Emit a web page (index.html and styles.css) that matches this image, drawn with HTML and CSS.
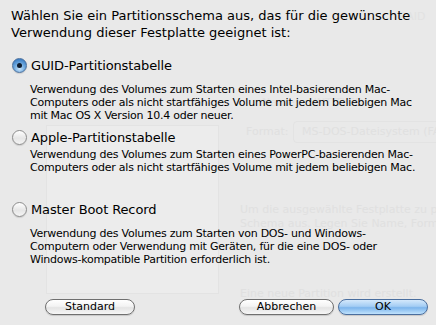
FILE: index.html
```html
<!DOCTYPE html>
<html lang="de">
<head>
    <meta charset="UTF-8">
    <title>Partitionsschema</title>
    <link rel="stylesheet" href="styles.css">
</head>
<body>
    <!-- window behind the sheet, shows through faintly -->
    <div class="behind">
        <div class="ghost-box"></div>
        <span class="ghost-tab">RAID</span>
        <span class="ghost-text g-name">Name:&nbsp;&nbsp;&nbsp;UNTITLED</span>
        <span class="ghost-text g-format">Format:</span>
        <span class="ghost-field">MS-DOS-Dateisystem (FAT)</span>
        <span class="ghost-text g-info">Um die ausgewählte Festplatte zu partitionieren,<br>Schema aus. Legen Sie Name, Format und</span>
        <span class="ghost-text g-new">Eine neue Partition wird erstellt.</span>
    </div>

    <div class="sheet">
        <p class="prompt">Wählen Sie ein Partitionsschema aus, das für die gewünschte<br>Verwendung dieser Festplatte geeignet ist:</p>

        <label class="option guid">
            <span class="radio checked"></span>
            <span class="option-name">GUID-Partitionstabelle</span>
        </label>
        <p class="desc guid-desc">Verwendung des Volumes zum Starten eines Intel-basierenden Mac-<br>Computers oder als nicht startfähiges Volume mit jedem beliebigen Mac<br>mit Mac OS X Version 10.4 oder neuer.</p>

        <label class="option apple">
            <span class="radio"></span>
            <span class="option-name">Apple-Partitionstabelle</span>
        </label>
        <p class="desc apple-desc">Verwendung des Volumes zum Starten eines PowerPC-basierenden Mac-<br>Computers oder als nicht startfähiges Volume mit jedem beliebigen Mac.</p>

        <label class="option mbr">
            <span class="radio"></span>
            <span class="option-name">Master Boot Record</span>
        </label>
        <p class="desc mbr-desc">Verwendung des Volumes zum Starten von DOS- und Windows-<br>Computern oder Verwendung mit Geräten, für die eine DOS- oder<br>Windows-kompatible Partition erforderlich ist.</p>

        <div class="buttons">
            <button class="btn btn-standard">Standard</button>
            <div class="spacer"></div>
            <button class="btn btn-cancel">Abbrechen</button>
            <button class="btn btn-ok">OK</button>
        </div>
    </div>
</body>
</html>
```

FILE: styles.css
```css
body {
    margin: 0;
    width: 436px;
    height: 325px;
    overflow: hidden;
    background-color: #e9e9e9;
    font-family: 'DejaVu Sans', 'Liberation Sans', sans-serif;
    color: #000;
    position: relative;
}

/* faint window content under the sheet */
.behind {
    position: absolute;
    inset: 0;
    overflow: hidden;
    color: #e0e0e0;
    font-size: 11px;
}

.ghost-box {
    position: absolute;
    left: 46px;
    top: 125px;
    width: 171px;
    height: 167px;
    border: 1px solid #e3e3e3;
    background-color: #ececec;
}

.ghost-tab {
    position: absolute;
    left: 399px;
    top: 10px;
    font-size: 11px;
    color: #e2e2e2;
}

.ghost-text {
    position: absolute;
    white-space: nowrap;
    line-height: 14px;
}

.g-name { left: 262px; top: 96px; }
.g-format { left: 246px; top: 125px; }
.g-info { left: 240px; top: 203px; }
.g-new { left: 240px; top: 287px; }

.ghost-field {
    position: absolute;
    left: 293px;
    top: 121px;
    width: 150px;
    height: 20px;
    padding-left: 8px;
    line-height: 20px;
    border: 1px solid #e3e3e3;
    border-radius: 4px;
    white-space: nowrap;
    overflow: hidden;
    color: #e0e0e0;
}

.sheet {
    position: relative;
    padding: 7px 8px 0 11px;
    white-space: nowrap;
}

.prompt {
    margin: 0;
    font-size: 13px;
    line-height: 17px;
}

.option {
    display: flex;
    align-items: center;
    height: 17px;
    font-size: 13px;
    line-height: 17px;
    letter-spacing: -0.12px;
}

.guid { margin-top: 16px; }
.apple { margin-top: 7px; }
.mbr { margin-top: 27px; }

.radio {
    width: 13px;
    height: 13px;
    margin-left: 1px;
    margin-right: 4px;
    border: 1px solid #8c8c8c;
    border-radius: 50%;
    background: linear-gradient(#ffffff, #e6e6e6 55%, #f4f4f4);
    box-shadow: 0 1px 1px rgba(0, 0, 0, 0.12);
    position: relative;
}

.radio.checked {
    border-color: #4a6f9c;
    background: radial-gradient(circle at 50% 75%, #c8e4fb, #6fa9de 45%, #3c7fc6 80%);
}

.radio.checked::after {
    content: "";
    position: absolute;
    left: 4px;
    top: 4px;
    width: 5px;
    height: 5px;
    border-radius: 50%;
    background-color: #0f1c2e;
}

.desc {
    margin: 0 0 0 19px;
    font-size: 11px;
    line-height: 13px;
    letter-spacing: -0.24px;
}

.guid-desc { margin-top: 9px; }
.apple-desc { margin-top: 2px; }
.mbr-desc { margin-top: 9px; }

.buttons {
    display: flex;
    gap: 4px;
    margin-top: 33px;
    padding-left: 34px;
}

.spacer {
    flex: 1;
}

.btn {
    height: 16px;
    padding: 0;
    font-family: inherit;
    font-size: 11px;
    line-height: 14px;
    color: #000;
    border: 1px solid #6f6f6f;
    border-radius: 8px;
    background: linear-gradient(#ffffff, #f3f3f3 45%, #e4e4e4 55%, #f6f6f6);
    box-shadow: 0 1px 1px rgba(0, 0, 0, 0.15);
}

.btn-standard { width: 90px; }
.btn-cancel { width: 95px; }

.btn-ok {
    width: 90px;
    border-color: #4a6e9e;
    background: linear-gradient(#d4e8fb, #a4cdf4 45%, #7db5ec 55%, #bfe2fd);
}
```
